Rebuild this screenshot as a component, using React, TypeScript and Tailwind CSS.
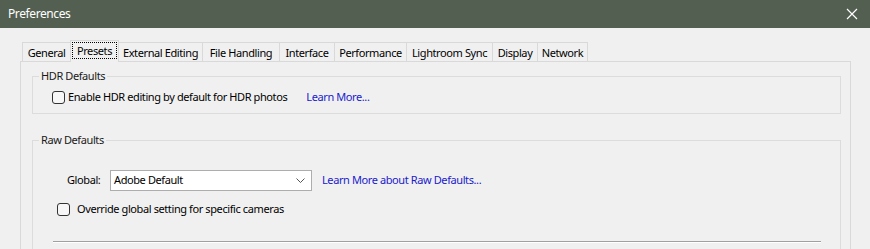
import React from "react";

const tabs = [
  { id: "general", label: "General", w: 49 },
  { id: "presets", label: "Presets", w: 49 },
  { id: "external", label: "External Editing", w: 85 },
  { id: "file", label: "File Handling", w: 78 },
  { id: "interface", label: "Interface", w: 56 },
  { id: "performance", label: "Performance", w: 73 },
  { id: "sync", label: "Lightroom Sync", w: 87 },
  { id: "display", label: "Display", w: 46 },
  { id: "network", label: "Network", w: 51 },
];

function Checkbox() {
  return (
    <span className="inline-block w-[13px] h-[13px] shrink-0 rounded-[3px] border border-[#333] bg-[#f7f7f7]" />
  );
}

function GroupBox({
  title,
  className,
  children,
}: {
  title: string;
  className?: string;
  children: React.ReactNode;
}) {
  return (
    <div className={"relative border border-[#dcdcdc] " + (className ?? "")}>
      <span className="absolute left-[6px] top-[-9px] bg-[#f0f0f0] px-[2px] leading-[16px] text-[#1a1a1a]">
        {title}
      </span>
      {children}
    </div>
  );
}

export default function App() {
  return (
    <div className="w-[870px] h-[249px] overflow-hidden bg-[#f0f0f0] font-['Noto_Sans',sans-serif] text-[11px] tracking-[-0.4px] text-black whitespace-nowrap">
      <div className="h-[28px] bg-[#535f51] flex items-center justify-between pl-[8px] pr-[12px]">
        <span className="text-white text-[12px]">Preferences</span>
        <svg width="12" height="12" viewBox="0 0 12 12" className="text-white">
          <path d="M1 1 L11 11 M11 1 L1 11" stroke="currentColor" strokeWidth="1.2" />
        </svg>
      </div>

      <div className="pl-[20px] pt-[12px]">
        <div className="flex items-end pl-[3px] h-[21px]">
          {tabs.map((t) =>
            t.id === "presets" ? (
              <div
                key={t.id}
                style={{ width: t.w }}
                className="relative z-10 -mb-px h-[22px] -ml-px border border-b-0 border-[#d9d9d9] bg-[#f0f0f0] flex items-start justify-center pt-[1px] px-[1px]"
              >
                <span className="w-full h-[17px] border border-dotted border-black flex items-center justify-center leading-[15px]">
                  {t.label}
                </span>
              </div>
            ) : (
              <div
                key={t.id}
                style={{ width: t.w }}
                className="h-[19px] -ml-px border border-b-0 border-[#d9d9d9] bg-[#f0f0f0] flex items-center justify-center leading-[17px]"
              >
                {t.label}
              </div>
            )
          )}
        </div>

        <div className="w-[831px] h-[200px] border border-[#d9d9d9] pl-[11px] pr-[9px] pt-[14px]">
          <GroupBox title="HDR Defaults" className="h-[38px]">
            <div className="flex items-center pl-[19px] pt-[12px]">
              <Checkbox />
              <span className="ml-[3px]">Enable HDR editing by default for HDR photos</span>
              <span className="ml-[19px] text-[#1a1acc]">Learn More...</span>
            </div>
          </GroupBox>

          <GroupBox title="Raw Defaults" className="mt-[26px] h-[140px]">
            <div className="flex items-center pl-[34px] pt-[29px]">
              <span className="w-[43px]">Global:</span>
              <div className="w-[202px] h-[21px] bg-white border border-[#adadad] flex items-center justify-between pl-[3px] pr-[6px]">
                <span>Adobe Default</span>
                <svg width="9" height="5" viewBox="0 0 9 5">
                  <path d="M0.5 0.5 L4.5 4.5 L8.5 0.5" stroke="#555" fill="none" strokeWidth="1" />
                </svg>
              </div>
              <span className="ml-[10px] text-[#1a1acc]">Learn More about Raw Defaults...</span>
            </div>
            <div className="flex items-center pl-[24px] mt-[10px]">
              <Checkbox />
              <span className="ml-[7px]">Override global setting for specific cameras</span>
            </div>
            <div className="ml-[20px] mr-[19px] mt-[23px] h-[2px] border-t border-[#a0a0a0] border-b border-b-white" />
          </GroupBox>
        </div>
      </div>
    </div>
  );
}
